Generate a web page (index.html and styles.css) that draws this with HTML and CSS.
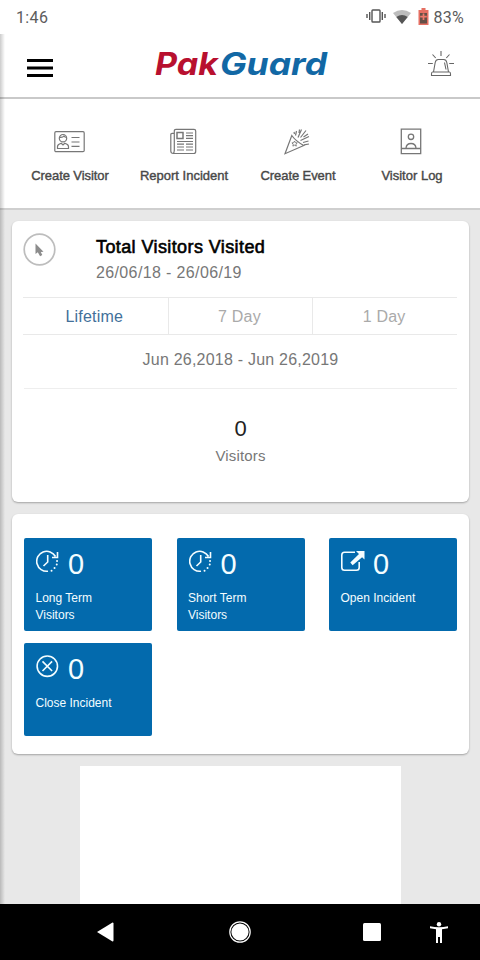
FILE: index.html
```html
<!DOCTYPE html>
<html lang="en">
<head>
<meta charset="utf-8">
<title>PakGuard</title>
<link rel="stylesheet" href="styles.css">
</head>
<body>
<div class="app">
  <div class="status">
    <span class="clock">1:46</span>
    <svg class="vibrate" width="20" height="14" viewBox="0 0 20 14" fill="none" stroke="#555" stroke-width="1.4"><rect x="6" y="1" width="8" height="12" rx=".8"/><path d="M3.700 3v8M16.300 3v8M1 5v4M19 5v4"/></svg>
    <svg class="wifi" width="18" height="14" viewBox="0 0 18 14"><path d="M0 3Q9-3 18 3L9 14Z" fill="#bdbdbd"/><path d="M3.300 7Q9 3 14.700 7L9 14Z" fill="#555"/></svg>
    <svg class="battery" width="11" height="17" viewBox="0 0 11 17"><path d="M3.500 0h4v2H10.500v15H.5V2h3z" fill="#e56f62"/><path d="M2 5h7v10.500H2z" fill="#655047"/><path d="M5.500 5.500v6.500M2.200 8.700h6.600" stroke="#ef796b" stroke-width="1.700"/></svg>
    <span class="percent">83%</span>
  </div>
  <header class="header">
    <svg class="burger" width="26" height="18" viewBox="0 0 26 18"><path d="M0 1.500h26M0 9h26M0 16.500h26" stroke="#000" stroke-width="2.800"/></svg>
    <svg class="logo" width="176" height="32" viewBox="0 0 176 32"><text x="0" y="26" textLength="63" lengthAdjust="spacingAndGlyphs" fill="#b8102f">Pak</text><text x="65" y="26" textLength="107" lengthAdjust="spacingAndGlyphs" fill="#1268a5">Guard</text></svg>
    <svg class="siren" width="26" height="26" viewBox="0 0 26 26" fill="none" stroke="#666" stroke-width="1.100"><path d="M5.500 21 7.200 11.500Q7.800 8.500 10.300 8.500h5.400q2.500 0 3.100 3L20.500 21M4.500 21h17q1 0 1 2v1.500h-19V23q0-2 1-2zM16.500 11.500l1.500 7M13 0v5M4.500 3.500 7.700 7M21.500 3.500 18.300 7M0 12.500h4.800M21.200 12.500H26"/></svg>
  </header>
  <nav class="actions">
    <div class="action">
      <svg width="31" height="28" viewBox="0 0 31 28" fill="none" stroke="#777" stroke-width="1.200"><rect x=".8" y="3.700" width="29.400" height="20" rx="1.200"/><circle cx="9" cy="10.200" r="3.700"/><path d="M5.500 9.300q3.300.5 4.500-1.300.8 1.400 2.600 1.400M3.500 20.500v-2q0-2 3.700-3.200L9 17l1.800-1.700q3.700 1.200 3.700 3.200v2zM17.500 9.500h8M17.500 14h8M17.500 18.300h8"/></svg>
      <span class="label l1">Create Visitor</span>
    </div>
    <div class="action">
      <svg width="28" height="28" viewBox="0 0 28 28" fill="none" stroke="#777" stroke-width="1.200"><path d="M5.300 23V3q0-1.700 1.700-1.700h18Q26.700 1.300 26.700 3v20.500q0 2-2 2H4.300q-2.500 0-2.500-2.500V6.500q0-1.200 1.300-1.200h2.200M5.300 22q0 3-1.200 3.500"/><rect x="8" y="4.500" width="6" height="6" stroke-width="1.500"/><path d="M17 5h7M17 7.700h7M17 10.400h7M8 13.500h16M8 16.200h7M17 16.200h7M8 19h7M17 19h7M8 22h7M17 22h7"/></svg>
      <span class="label l2">Report Incident</span>
    </div>
    <div class="action">
      <svg width="28" height="28" viewBox="0 0 28 28" fill="none" stroke="#777" stroke-width="1.200"><path d="M2 25.700 8.800 7.500Q12.500 13 20.800 17.500Z"/><path d="m11.500 13 .9 1.700 1.900.2-1.400 1.300.4 1.900-1.700-.9-1.700.9.300-1.900-1.300-1.300 1.800-.2z" stroke-width=".9"/><path d="M12.500 7.500 13.500 3M15 9.500l3.500-8M17.500 9.500l5.500-7M17.500 12.500l8.500-4M20 14.500l5.500-1.500M21 16.800l5-.8M11 4l.5 2M16 5l.5-3.500M20.500 9l4.500-3"/></svg>
      <span class="label l3">Create Event</span>
    </div>
    <div class="action">
      <svg width="22" height="28" viewBox="0 0 22 28" fill="none" stroke="#777" stroke-width="1.300"><path d="M1.300 1.200h19.400v24.500H1.300zM1.300 20.500h19.400M6 20q.5-4.500 5-4.500t5 4.500"/><circle cx="11" cy="8.800" r="2.700"/></svg>
      <span class="label l4">Visitor Log</span>
    </div>
  </nav>
  <main class="content">
    <section class="card summary">
      <div class="summary-head">
        <svg width="33" height="33" viewBox="0 0 33 33"><circle cx="16.500" cy="16.500" r="15.300" fill="none" stroke="#bdbdbd" stroke-width="1.700"/><path d="M12.500 10.500v10.600l2.300-1.800 2.300 4 2.200-1.200-1.500-3 2.700-.4z" fill="#8c8c8c"/></svg>
        <div class="titles">
          <h1>Total Visitors Visited</h1>
          <p>26/06/18 - 26/06/19</p>
        </div>
      </div>
      <div class="tabs">
        <span class="tab active">Lifetime</span><span class="tab">7 Day</span><span class="tab">1 Day</span>
      </div>
      <div class="range">Jun 26,2018 - Jun 26,2019</div>
      <div class="total">
        <div class="total-number">0</div>
        <div class="total-label">Visitors</div>
      </div>
    </section>
    <section class="card tiles">
      <div class="tile">
        <div class="tile-top"><svg width="24" height="24" viewBox="0 0 24 24" fill="none" stroke="#f4fdff" stroke-width="1.600"><path d="M12 21.200A10 10 0 1 1 19.500 6.500M21.500 2v5.500h-5.500M11.700 5v7L7.500 16"/><path d="M15.500 20.700h.1M18.500 18h.1M20.700 14.500h.1M21 11h.1" stroke-width="1.900" stroke-linecap="round"/></svg><b>0</b></div>
        <p>Long Term<br>Visitors</p>
      </div>
      <div class="tile">
        <div class="tile-top"><svg width="24" height="24" viewBox="0 0 24 24" fill="none" stroke="#f4fdff" stroke-width="1.600"><path d="M12 21.200A10 10 0 1 1 19.500 6.500M21.500 2v5.500h-5.500M11.700 5v7L7.500 16"/><path d="M15.500 20.700h.1M18.500 18h.1M20.700 14.500h.1M21 11h.1" stroke-width="1.900" stroke-linecap="round"/></svg><b>0</b></div>
        <p>Short Term<br>Visitors</p>
      </div>
      <div class="tile">
        <div class="tile-top"><svg width="24" height="24" viewBox="0 0 24 24" fill="none" stroke="#f4fdff" stroke-width="1.600"><path d="M14 2.200H3.500Q.8 2.200.8 5v12.500q0 2.700 2.700 2.700H15.500q2.700 0 2.700-2.700V12"/><path d="M15 1h8.500v8.500l-2.400-2.300-9.500 8-2.300-2.600L18 4z" fill="#f4fdff" stroke="none"/></svg><b>0</b></div>
        <p>Open Incident</p>
      </div>
      <div class="tile">
        <div class="tile-top"><svg width="24" height="24" viewBox="0 0 24 24" fill="none" stroke="#f4fdff" stroke-width="1.600"><circle cx="11.300" cy="11.200" r="10.200"/><path d="m6.500 6.400 9.600 9.600M16.100 6.400l-9.600 9.600"/></svg><b>0</b></div>
        <p>Close Incident</p>
      </div>
    </section>
    <div class="panel"></div>
  </main>
  <footer class="navbar">
    <svg class="back" width="17" height="20" viewBox="0 0 17 20" fill="#fff"><path d="M0 10 15.500.5q1 0 1 1v17q0 1-1 1z"/></svg>
    <svg class="home" width="22" height="22" viewBox="0 0 22 22"><circle cx="11" cy="11" r="10.200" fill="none" stroke="#fff" stroke-width="1.200"/><circle cx="11" cy="11" r="8.600" fill="#fff"/></svg>
    <svg class="recent" width="18" height="18" viewBox="0 0 18 18"><rect width="18" height="18" rx="1.500" fill="#fff"/></svg>
    <svg class="access" width="18" height="21" viewBox="0 0 18 21" fill="#fff"><circle cx="9" cy="2.300" r="2.200"/><path d="M0 4.200Q9 6.200 18 4.200v2l-6 1V21h-2v-6H8v6H6V7.200L0 6.200z"/></svg>
  </footer>
  <div class="edge"></div>
</div>
</body>
</html>
```

FILE: styles.css
```css
* { box-sizing: border-box; }
body { margin: 0; font-family: "Liberation Sans", Arial, sans-serif; }
h1, p { margin: 0; }
svg { display: block; flex: none; }
.app { position: relative; width: 480px; height: 960px; display: flex; flex-direction: column; overflow: hidden; background: #e8e8e8; }
.status { height: 34px; display: flex; align-items: center; padding: 0 16px; background: #fff; color: #5c5c5c; font: 16px/34px Roboto, sans-serif; flex: none; }
.clock { margin-right: auto; letter-spacing: .35px; padding-top: 1px; }
.vibrate { margin: -2px 7px 0 0; }
.wifi { margin: -1px 7px 0 0; }
.battery { margin: -1px 4px 0 0; }
.percent { letter-spacing: .3px; padding-top: 1px; }
.header { height: 65px; display: flex; align-items: center; padding: 0 26px 0 27px; background: #fff; border-bottom: 2px solid #c9c9c9; flex: none; }
.burger { margin-top: 4px; }
.logo { margin-left: 102px; margin-top: -1px; overflow: visible; font: italic 700 31px Inter, sans-serif; }
.siren { margin: -3px 0 0 auto; }
.actions { height: 111px; display: grid; grid-template-columns: repeat(4, 114px); padding: 29px 11px 0 13px; background: #fff; border-bottom: 2px solid #cfcfcf; flex: none; }
.action { display: flex; flex-direction: column; align-items: center; gap: 12px; }
.action svg { position: relative; left: -1px; }
.label { font-size: 13px; line-height: 16px; color: #484848; -webkit-text-stroke: .4px #484848; white-space: nowrap; }
.l1, .l3 { letter-spacing: -.08px; }
.content { flex: 1; min-height: 0; padding: 11px 11px 0 12px; overflow: hidden; }
.card { background: #fff; border-radius: 6px; box-shadow: 0 1px 2px rgba(0,0,0,.3); }
.summary { height: 281px; padding: 0 12px; }
.summary-head { height: 76px; display: flex; padding: 12px 0 0; }
.summary-head svg { margin-left: -1px; }
.titles { margin-left: 40px; }
h1 { font-size: 18px; font-weight: 400; line-height: 24px; margin-top: 2px; letter-spacing: .4px; color: #000; -webkit-text-stroke: .6px #000; }
.titles p { font-size: 16px; line-height: 22px; margin-top: 3px; letter-spacing: .37px; color: #777; }
.tabs { height: 38px; display: grid; grid-template-columns: repeat(3, 1fr); border-top: 1px solid #e9e9e9; border-bottom: 1px solid #e9e9e9; font-size: 16px; line-height: 37px; letter-spacing: .2px; text-align: center; color: #aaa; margin: 0 0 0 -1px; }
.tab { padding-right: 2px; }
.tab + .tab { border-left: 1px solid #e9e9e9; }
.tab.active { color: #42709a; }
.range { height: 54px; border-bottom: 1px solid #eee; text-align: center; font-size: 16px; line-height: 49px; letter-spacing: .22px; color: #777; }
.total { text-align: center; padding-top: 27px; }
.total-number { font-size: 22px; line-height: 26px; color: #222; }
.total-label { font-size: 15px; line-height: 20px; margin-top: 4px; letter-spacing: .15px; color: #777; }
.tiles { height: 240px; margin-top: 12px; padding: 24px 12px 18px; display: grid; grid-template-columns: repeat(3, 128px); grid-template-rows: 93px 93px; justify-content: space-between; row-gap: 12px; }
.tile { background: #036aad; border-radius: 2px; padding: 12px; color: #f4fdff; }
.tile-top { height: 28px; display: flex; gap: 8px; }
.tile-top b { font-size: 29px; line-height: 29px; font-weight: 400; }
.tile p { font-size: 12px; line-height: 17.500px; margin: 11.500px 0 0 -.5px; }
.panel { width: 321px; height: 138px; margin: 12px 0 0 68px; background: #fff; }
.navbar { height: 56px; background: #000; display: flex; align-items: center; padding-left: 97px; flex: none; }
.home { margin-left: 115px; }
.recent { margin-left: 112px; }
.access { margin-left: 49px; }
.edge { position: absolute; left: 0; top: 34px; width: 5px; height: 870px; background: linear-gradient(90deg, rgba(0,0,0,.2), rgba(0,0,0,0)); }
```
